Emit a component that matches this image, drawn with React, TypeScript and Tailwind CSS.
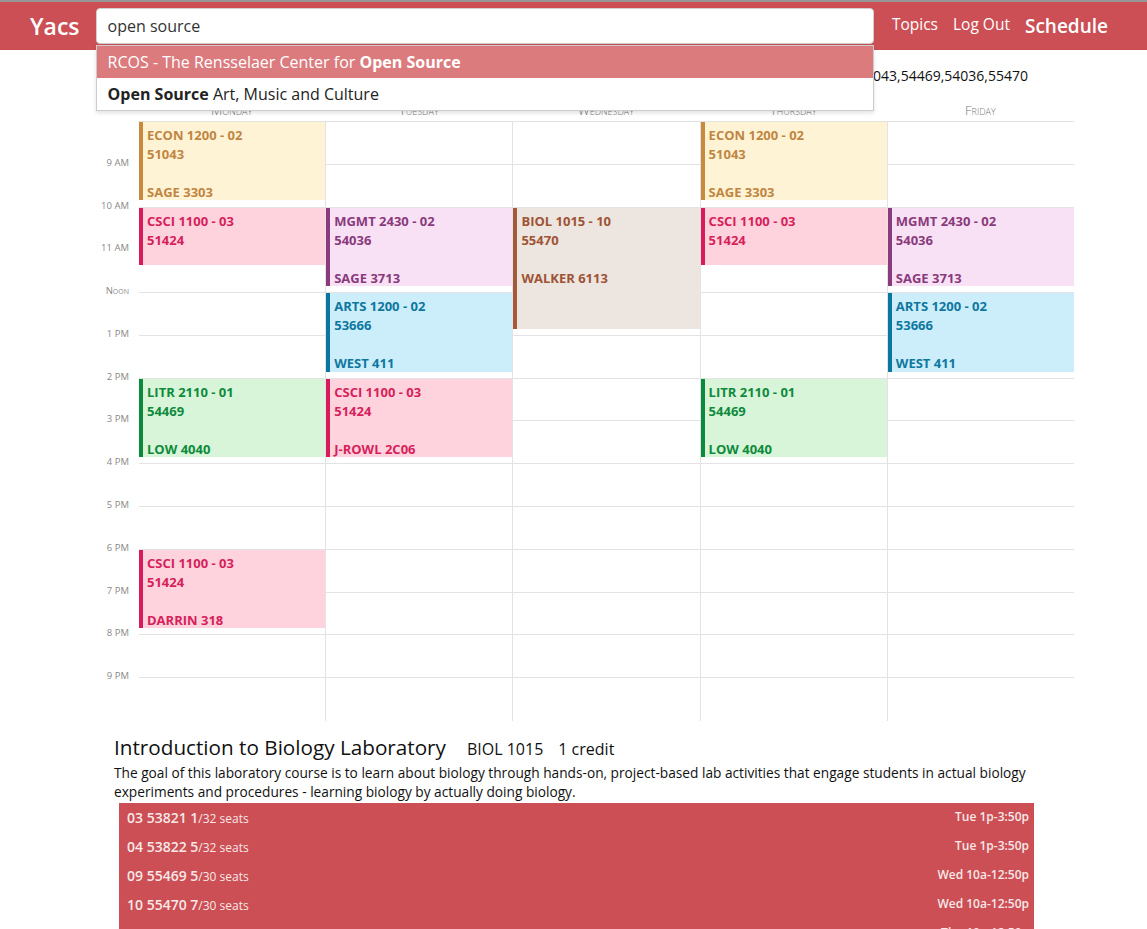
import React from "react";

const H = 42.79;

const colors = {
  econ: "bg-[#fff3d6] border-[#c98a3e] text-[#bf8642]",
  csci: "bg-[#ffd3dd] border-[#d81c5b] text-[#d61f5b]",
  mgmt: "bg-[#f8e1f4] border-[#8a3b7e] text-[#8a3a7c]",
  arts: "bg-[#cbeefa] border-[#0b76a0] text-[#0e77a0]",
  biol: "bg-[#ede5e0] border-[#a4583c] text-[#9e5335]",
  litr: "bg-[#d8f5d9] border-[#0a8a3c] text-[#0e8a3c]",
};

type Ev = {
  day: number;
  start: number;
  end: number;
  code: string;
  crn: string;
  room: string;
  c: keyof typeof colors;
};

const events: Ev[] = [
  { day: 0, start: 8, end: 9.833, code: "ECON 1200 - 02", crn: "51043", room: "SAGE 3303", c: "econ" },
  { day: 0, start: 10, end: 11.333, code: "CSCI 1100 - 03", crn: "51424", room: "DARRIN 308", c: "csci" },
  { day: 0, start: 14, end: 15.833, code: "LITR 2110 - 01", crn: "54469", room: "LOW 4040", c: "litr" },
  { day: 0, start: 18, end: 19.833, code: "CSCI 1100 - 03", crn: "51424", room: "DARRIN 318", c: "csci" },
  { day: 1, start: 10, end: 11.833, code: "MGMT 2430 - 02", crn: "54036", room: "SAGE 3713", c: "mgmt" },
  { day: 1, start: 12, end: 13.833, code: "ARTS 1200 - 02", crn: "53666", room: "WEST 411", c: "arts" },
  { day: 1, start: 14, end: 15.833, code: "CSCI 1100 - 03", crn: "51424", room: "J-ROWL 2C06", c: "csci" },
  { day: 2, start: 10, end: 12.833, code: "BIOL 1015 - 10", crn: "55470", room: "WALKER 6113", c: "biol" },
  { day: 3, start: 8, end: 9.833, code: "ECON 1200 - 02", crn: "51043", room: "SAGE 3303", c: "econ" },
  { day: 3, start: 10, end: 11.333, code: "CSCI 1100 - 03", crn: "51424", room: "DARRIN 308", c: "csci" },
  { day: 3, start: 14, end: 15.833, code: "LITR 2110 - 01", crn: "54469", room: "LOW 4040", c: "litr" },
  { day: 4, start: 10, end: 11.833, code: "MGMT 2430 - 02", crn: "54036", room: "SAGE 3713", c: "mgmt" },
  { day: 4, start: 12, end: 13.833, code: "ARTS 1200 - 02", crn: "53666", room: "WEST 411", c: "arts" },
];

const days = ["Monday", "Tuesday", "Wednesday", "Thursday", "Friday"];
const hours = ["9 AM", "10 AM", "11 AM", "Noon", "1 PM", "2 PM", "3 PM", "4 PM", "5 PM", "6 PM", "7 PM", "8 PM", "9 PM", ""];

const sections = [
  { sec: "03", crn: "53821", open: "1", seats: "/32 seats", time: "Tue 1p-3:50p" },
  { sec: "04", crn: "53822", open: "5", seats: "/32 seats", time: "Tue 1p-3:50p" },
  { sec: "09", crn: "55469", open: "5", seats: "/30 seats", time: "Wed 10a-12:50p" },
  { sec: "10", crn: "55470", open: "7", seats: "/30 seats", time: "Wed 10a-12:50p" },
  { sec: "11", crn: "55471", open: "6", seats: "/30 seats", time: "Thu 10a-12:50p" },
];

const Header = () => (
  <div className="border-t-2 border-[#979797] bg-[#cb4f54] h-[50px] flex items-center pl-[30px] pr-[39px] text-white">
    <div className="text-[23px] font-semibold leading-none">Yacs</div>
    <div className="relative flex-1 ml-[16px]">
      <div className="h-[36px] bg-white rounded-[4px] border border-[#cfcfcf] flex items-center pl-[11px] text-[16px] text-[#333]">
        open source
      </div>
      <div className="absolute left-0 right-0 top-[37px] z-10 bg-white border border-[#cccccc] shadow-[0_2px_4px_rgba(0,0,0,0.12)] text-[16px]">
        <div className="h-[32px] flex items-center pl-[11px] bg-[#db7b7e] text-white">
          RCOS - The Rensselaer Center for&nbsp;<span className="font-bold">Open Source</span>
        </div>
        <div className="h-[32px] flex items-center pl-[11px] text-[#222]">
          <span className="font-bold">Open Source</span>&nbsp;Art, Music and Culture
        </div>
      </div>
    </div>
    <div className="ml-[18px] text-[15.5px] -mt-[3px]">Topics</div>
    <div className="ml-[15px] text-[15.5px] -mt-[3px]">Log Out</div>
    <div className="ml-[15px] text-[19px] font-semibold">Schedule</div>
  </div>
);

const Calendar = () => (
  <div className="ml-[95px] w-[979px]">
    <div className="flex">
      <div className="w-[43px]" />
      <div className="flex-1 flex border-b border-[#e3e3e3] pt-[18px] pb-[4px]">
        {days.map((d) => (
          <div key={d} className="flex-1 text-center text-[13px] leading-[13px] font-light text-[#777] [font-variant:small-caps]">
            {d}
          </div>
        ))}
      </div>
    </div>
    <div className="flex">
      <div className="w-[43px]">
        {hours.map((h, i) => (
          <div key={i} className="h-[42.79px] flex items-end justify-end pr-[9px]">
            <span className={`text-[9.5px] leading-[12px] text-[#888] translate-y-[4px] ${h === "Noon" ? "[font-variant:small-caps]" : ""}`}>
              {h}
            </span>
          </div>
        ))}
      </div>
      {days.map((d, di) => (
        <div key={d} className={`flex-1 relative border-l ${di === 0 ? "border-transparent" : "border-[#e3e3e3]"}`}>
          {hours.map((_, i) => (
            <div key={i} className={`h-[42.79px] ${i < hours.length - 1 ? "border-b border-[#e3e3e3]" : ""}`} />
          ))}
          {events
            .filter((e) => e.day === di)
            .map((e, i) => (
              <div
                key={i}
                className={`absolute left-0 right-0 border-l-4 pl-[4px] pt-[4px] overflow-hidden text-[13px] font-bold leading-[19px] ${colors[e.c]}`}
                style={{ top: (e.start - 8) * H, height: (e.end - e.start) * H }}
              >
                <div>{e.code}</div>
                <div>{e.crn}</div>
                <div>&nbsp;</div>
                <div>{e.room}</div>
              </div>
            ))}
        </div>
      ))}
    </div>
  </div>
);

const Course = () => (
  <div className="ml-[114px] w-[920px] mt-[13px] text-[#111]">
    <div className="flex items-baseline">
      <div className="text-[20.7px] leading-[26px]">Introduction to Biology Laboratory</div>
      <div className="ml-[21px] text-[16px]">BIOL 1015</div>
      <div className="ml-[15px] text-[16px]">1 credit</div>
    </div>
    <div className="text-[13.7px] leading-[19px] mt-[2px]">
      The goal of this laboratory course is to learn about biology through hands-on, project-based lab activities that engage students in actual biology experiments and procedures - learning biology by actually doing biology.
    </div>
    <div className="ml-[5px] mt-[2px] bg-[#cb4f54] text-[#f8e8e8]">
      {sections.map((s) => (
        <div key={s.sec} className="h-[29px] flex items-center justify-between pl-[8px] pr-[5px]">
          <div className="text-[14px] font-semibold">
            {s.sec} {s.crn} {s.open}
            <span className="text-[12px] font-normal">{s.seats}</span>
          </div>
          <div className="text-[12px] font-semibold">{s.time}</div>
        </div>
      ))}
    </div>
  </div>
);

export default function App() {
  return (
    <div className="font-['Open_Sans',sans-serif] bg-white min-h-[929px]">
      <Header />
      <div className="mt-[16px] pr-[119px] text-right text-[14px] leading-[20px] text-[#111]">
        51424,53666,51043,54469,54036,55470
      </div>
      <Calendar />
      <Course />
    </div>
  );
}
